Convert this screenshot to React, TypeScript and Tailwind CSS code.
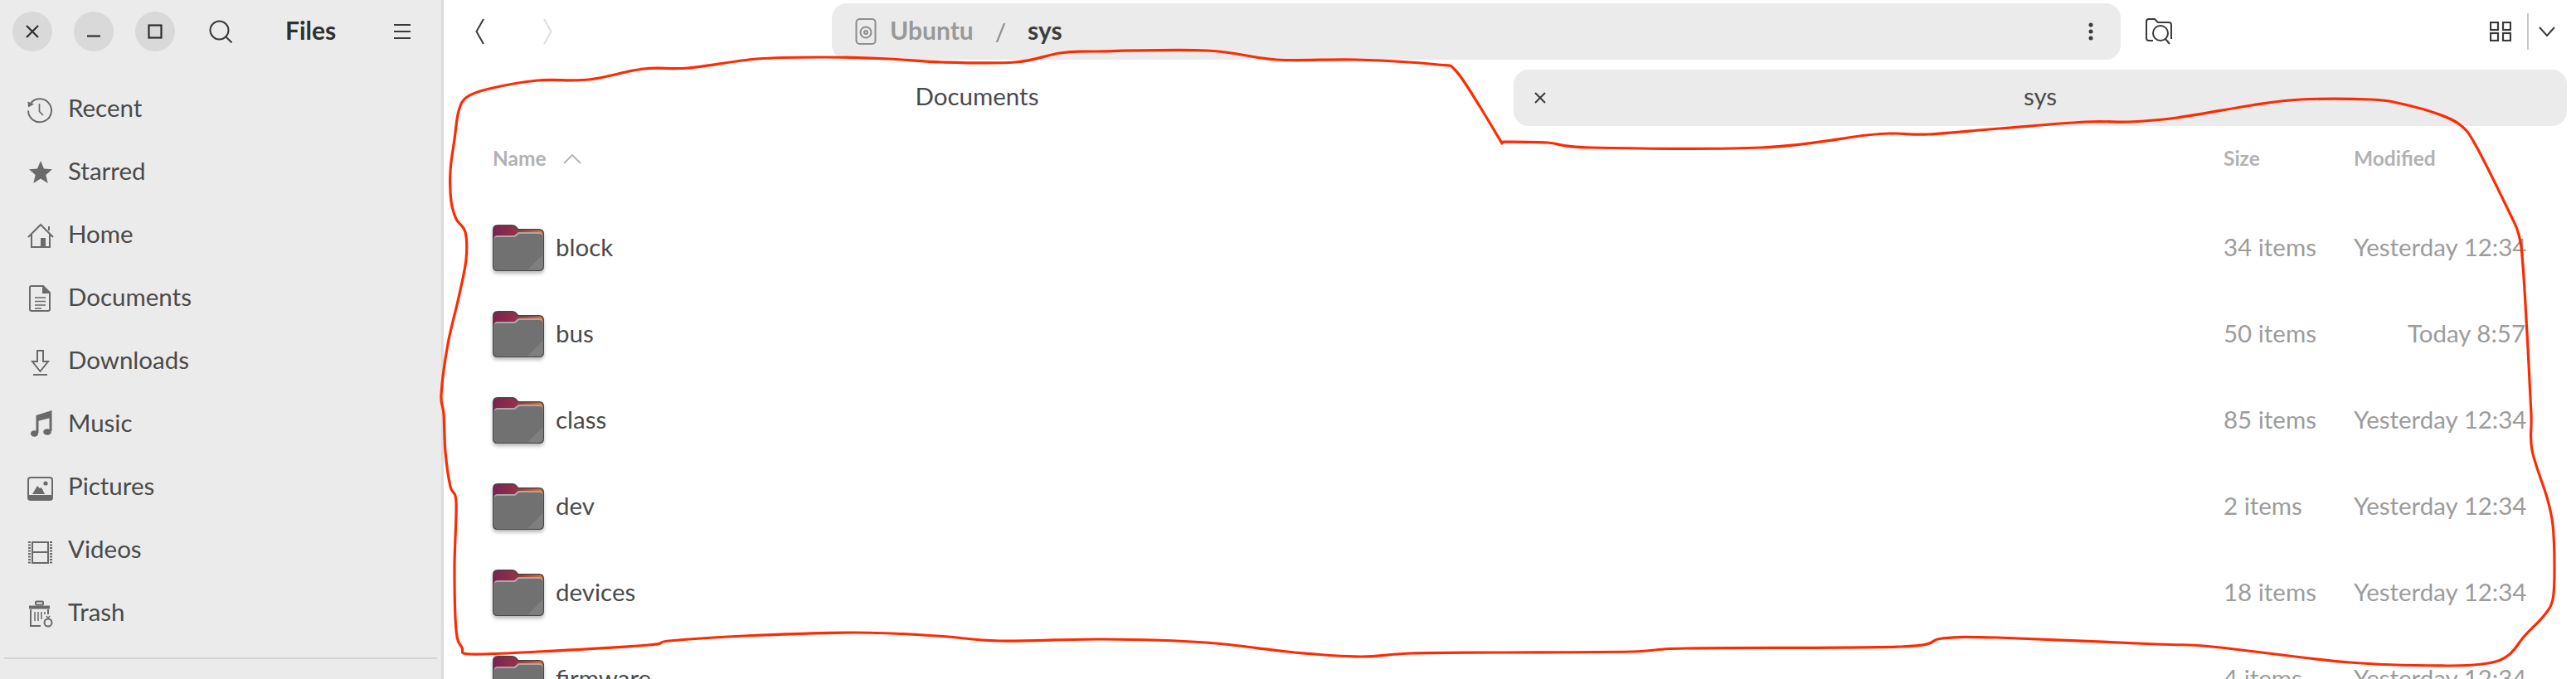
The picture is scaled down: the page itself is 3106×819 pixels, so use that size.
import React from "react";

const pts: [number, number][] = [[1812,171],[1866,172],[1918,178],[2124,178],[2251,163],[2285,161],[2325,162],[2411,155],[2515,147],[2567,147],[2625,142],[2715,127],[2774,120],[2859,120],[2895,125],[2941,138],[2968,152],[2986,177],[3026,257],[3037,283],[3042,320],[3048,420],[3052,500],[3053,543],[3071,600],[3078,633],[3080,683],[3078,723],[3067,743],[3044,767],[3025,790],[3000,800],[2950,803],[2833,799],[2667,780],[2600,777],[2408,769],[2342,770],[2292,780],[2033,782],[1967,786],[1800,787],[1702,788],[1640,792],[1561,787],[1454,775],[1329,771],[1205,773],[1130,767],[1031,763],[898,767],[807,773],[782,778],[649,786],[567,789],[557,781],[550,760],[548,685],[550,606],[543,587],[537,545],[535,499],[532,476],[540,415],[553,359],[562,313],[561,280],[550,264],[544,243],[543,206],[548,168],[553,134],[563,117],[590,107],[648,97],[710,96],[776,83],[830,82],[913,71],[996,69],[1071,71],[1137,75],[1224,75],[1278,64],[1319,62],[1456,61],[1539,72],[1635,72],[1734,78],[1755,85],[1784,128],[1811,173]];

function smooth(p: [number, number][]) {
  let d = `M${p[0][0]} ${p[0][1]}`;
  for (let i = 0; i < p.length - 1; i++) {
    const a = p[Math.max(i - 1, 0)], b = p[i], c = p[i + 1], e = p[Math.min(i + 2, p.length - 1)];
    const c1x = b[0] + (c[0] - a[0]) / 6, c1y = b[1] + (c[1] - a[1]) / 6;
    const c2x = c[0] - (e[0] - b[0]) / 6, c2y = c[1] - (e[1] - b[1]) / 6;
    d += ` C${c1x.toFixed(1)} ${c1y.toFixed(1)} ${c2x.toFixed(1)} ${c2y.toFixed(1)} ${c[0]} ${c[1]}`;
  }
  return d;
}

const G = "#6a6a6a";
const I = ({ children }: { children: React.ReactNode }) => (
  <svg width="32" height="32" viewBox="0 0 32 32" fill="none" stroke={G} strokeWidth="2" className="shrink-0 overflow-visible">{children}</svg>
);

const icons: Record<string, React.ReactNode> = {
  Recent: <I><path d="M5.5 8A14 14 0 1 1 2 17.5" /><path d="M1.5 6.5 9 9.5l-7 4z" fill={G} stroke="none" /><path d="M15.5 9v9.5l4.5 4.5" strokeWidth="1.7" /></I>,
  Starred: <I><path d="M17 2l4 9.5 10 .8-7.7 6.6 2.4 10L17 23.5 8.3 29l2.4-10L3 12.3l10-.8z" fill={G} stroke="none" /></I>,
  Home: <I><path d="M2 18 17 3l15 15" /><path d="M6 15v15h22V15" /><path d="M27 5v5" strokeWidth="2" /><rect x="17" y="19" width="6" height="11" fill={G} stroke="none" /></I>,
  Documents: <I><path d="M6 1h14l8 8v20a2 2 0 0 1-2 2H6a2 2 0 0 1-2-2V3a2 2 0 0 1 2-2z" /><path d="M19 1l9 9h-9z" fill={G} stroke="none" /><path d="M10 15h13M10 19.500h13M10 24h13M10 28h8" strokeWidth="1.7" /></I>,
  Downloads: <I><path d="M13 3h7v13h6L16.500 28 7 16h6z" /><path d="M8 32h17" /></I>,
  Music: <I><path d="M13 26V6l16-5v23" strokeWidth="3" /><path d="M13 5l16-4v7l-16 4z" fill={G} stroke="none" /><ellipse cx="9.500" cy="27" rx="4.500" ry="3.800" fill={G} stroke="none" /><ellipse cx="25" cy="25" rx="4.800" ry="3.800" fill={G} stroke="none" /></I>,
  Pictures: <I><rect x="2" y="4" width="29" height="27" rx="3" /><path d="M2 25h29v3a3 3 0 0 1-3 3H5a3 3 0 0 1-3-3z" fill={G} stroke="none" /><path d="M7 24l6-10 3 3 2-1 4 8z" fill={G} stroke="none" /><circle cx="23" cy="11" r="2.600" fill={G} stroke="none" /></I>,
  Videos: <I><path d="M7 6h19M7 18h19M7 31h19" strokeWidth="2" /><path d="M7 5v27M26 5v27" strokeWidth="2" /><path d="M3.500 5v27M29.500 5v27" strokeWidth="3" strokeDasharray="2 1.500" /></I>,
  Trash: <I><path d="M3 8.500h25" strokeWidth="4" /><rect x="11" y="1.500" width="9" height="4" rx="1" /><path d="M5 11v20h12" /><path d="M26 11v6" /><path d="M10 14v11M14 14v11M18 14v9M22 14v3" strokeWidth="1.500" /><circle cx="26" cy="27" r="4.500" /><path d="M24 19l2 3 2-3" strokeWidth="1.500" /></I>,
};

const Folder = () => (
  <svg width="62" height="60" viewBox="0 0 62 60" className="shrink-0 overflow-visible drop-shadow-[0_3px_2px_rgba(0,0,0,0.28)]">
    <defs>
      <linearGradient id="fold" x1="0" x2="1" y1="0" y2="0">
        <stop offset="0" stopColor="#7a2350" />
        <stop offset="0.45" stopColor="#96304a" />
        <stop offset="1" stopColor="#e8702c" />
      </linearGradient>
    </defs>
    <path d="M6 0H24Q27 0 29 2.500L31 5H56Q62 5 62 11V50Q62 56 56 56H6Q0 56 0 50V6Q0 0 6 0Z" fill="#4a4446" />
    <path d="M6 1.500H24Q26 1.500 28 4L30 6.500H56Q60.500 6.500 60.500 11V20H1.500V6Q1.500 1.500 6 1.500Z" fill="url(#fold)" />
    <path d="M1.500 18Q1.500 13 6 13H26L31 9H56Q60.500 9 60.500 13V50Q60.500 54.500 56 54.500H6Q1.500 54.500 1.500 50Z" fill="#a8a8a8" />
    <path d="M1.500 19Q1.500 15 6 15H27L32 11H56Q60.500 11 60.500 15V50Q60.500 54.500 56 54.500H6Q1.500 54.500 1.500 50Z" fill="#717171" />
    <path d="M42 54.500 60.500 36V50Q60.500 54.500 56 54.500Z" fill="#7f7f7f" />
  </svg>
);

const items = ["Recent", "Starred", "Home", "Documents", "Downloads", "Music", "Pictures", "Videos", "Trash"];
const rows = [
  ["block", "34 items", "Yesterday 12:34"],
  ["bus", "50 items", "Today 8:57"],
  ["class", "85 items", "Yesterday 12:34"],
  ["dev", "2 items", "Yesterday 12:34"],
  ["devices", "18 items", "Yesterday 12:34"],
  ["firmware", "4 items", "Yesterday 12:34"],
];

const Round = ({ children }: { children: React.ReactNode }) => (
  <div className="flex h-[48px] w-[48px] items-center justify-center rounded-full bg-[#d9d9d9]">{children}</div>
);

export default function App() {
  return (
    <div className="relative flex h-[819px] w-[3106px] overflow-hidden bg-white text-[29.5px] font-normal text-[#4a4a4a] [font-family:Lato,'Noto_Sans',sans-serif]">
      <aside className="flex h-full w-[535px] shrink-0 flex-col border-r-[3px] border-[#dcdcdc] bg-[#ebebeb]">
        <header className="flex h-[76px] items-center pl-[15px]">
          <div className="flex gap-[26px]">
            <Round><svg width="18" height="18" viewBox="0 0 18 18" stroke="#2e2e2e" strokeWidth="2.200"><path d="M2 2l14 14M16 2 2 16" /></svg></Round>
            <Round><svg width="18" height="18" viewBox="0 0 18 18" stroke="#2e2e2e" strokeWidth="2.200"><path d="M1 14.500h16" /></svg></Round>
            <Round><svg width="18" height="18" viewBox="0 0 18 18" fill="none" stroke="#2e2e2e" strokeWidth="2.200"><rect x="1.500" y="1.500" width="15" height="15" /></svg></Round>
          </div>
          <svg width="28" height="28" viewBox="0 0 28 28" fill="none" stroke="#3a3a3a" strokeWidth="2" className="ml-[41px]"><circle cx="12.500" cy="12.500" r="11" /><path d="M20.500 20.500l7 7" /></svg>
          <span className="ml-[64px] pb-[3px] text-[30px] font-bold text-[#303030]">Files</span>
          <svg width="20" height="18" viewBox="0 0 20 18" stroke="#3a3a3a" strokeWidth="2" className="ml-[70px]"><path d="M0 1h20M0 9h20M0 17h20" /></svg>
        </header>
        <nav className="flex flex-col pt-[18px]">
          {items.map((t) => (
            <div key={t} className="flex h-[76px] items-center gap-[18px] pl-[32px]">
              {icons[t]}
              <span className="pb-[4px]">{t}</span>
            </div>
          ))}
        </nav>
        <div className="mx-[5px] mt-[15px] h-[2px] bg-[#d3d3d3]" />
      </aside>

      <main className="flex min-w-0 flex-1 flex-col">
        <div className="flex h-[76px] shrink-0 items-center">
          <div className="flex h-full w-[468px] items-center pl-[38px]">
            <svg width="11" height="32" viewBox="0 0 11 32" fill="none" stroke="#3a3a3a" strokeWidth="2"><path d="M10 1 1.500 16 10 31" /></svg>
            <svg width="11" height="32" viewBox="0 0 11 32" fill="none" stroke="#dedede" strokeWidth="2" className="ml-[71px]"><path d="M1 1l8.500 15L1 31" /></svg>
          </div>
          <div className="flex h-[68px] w-[1554px] items-center rounded-[18px] bg-[#ebebeb] pl-[28px] pr-[33px]">
            <svg width="26" height="32" viewBox="0 0 26 32" fill="none" stroke="#8e8e8e" strokeWidth="2"><rect x="1.500" y="1" width="23" height="30" rx="4" /><circle cx="13" cy="17" r="6.500" /><circle cx="13" cy="17" r="2" /></svg>
            <span className="ml-[16px] pb-[3px] text-[30px] font-bold text-[#999999]">Ubuntu</span>
            <span className="ml-[26px] text-[#8a8a8a]">/</span>
            <span className="ml-[26px] pb-[3px] text-[30px] font-bold text-[#3d3d3d]">sys</span>
            <svg width="6" height="22" viewBox="0 0 6 22" fill="#3a3a3a" className="ml-auto"><circle cx="3" cy="3" r="2.500" /><circle cx="3" cy="11" r="2.500" /><circle cx="3" cy="19" r="2.500" /></svg>
          </div>
          <svg width="33" height="32" viewBox="0 0 33 32" fill="none" stroke="#3a3a3a" strokeWidth="2" className="ml-[30px]"><path d="M9 27H4a3 3 0 0 1-3-3V4a3 3 0 0 1 3-3h7l4 4h13a3 3 0 0 1 3 3v17" /><circle cx="18" cy="18" r="9" /><path d="M24 25l5 6" /></svg>
          <svg width="26" height="24" viewBox="0 0 26 24" fill="none" stroke="#3a3a3a" strokeWidth="2.200" className="ml-auto"><rect x="1" y="1" width="9" height="9" /><rect x="16" y="1" width="9" height="9" /><rect x="1" y="14" width="9" height="9" /><rect x="16" y="14" width="9" height="9" /></svg>
          <div className="ml-[19px] h-[44px] w-[2px] bg-[#c8c8c8]" />
          <svg width="20" height="12" viewBox="0 0 20 12" fill="none" stroke="#3a3a3a" strokeWidth="2" className="ml-[12px] mr-[25px]"><path d="M1 1l9 10 9-10" /></svg>
        </div>

        <div className="flex h-[76px] shrink-0 pr-[11px]">
          <div className="flex w-[1286px] items-center justify-center pt-[4px]">Documents</div>
          <div className="ml-[4px] mt-[8px] grid flex-1 grid-cols-[64px_1fr_64px] items-center rounded-[18px] bg-[#ebebeb]">
            <svg width="14" height="14" viewBox="0 0 14 14" stroke="#3a3a3a" strokeWidth="2" className="justify-self-center"><path d="M1 1l12 12M13 1 1 13" /></svg>
            <span className="pb-[3px] text-center">sys</span>
          </div>
        </div>

        <div className="flex h-[82px] shrink-0 items-center pl-[59px] pr-[61px] pb-[3px] text-[24.5px] font-bold text-[#b2b2b2]">
          <div className="flex flex-1 items-center">
            <span>Name</span>
            <svg width="22" height="12" viewBox="0 0 22 12" fill="none" stroke="#b2b2b2" strokeWidth="1.800" className="ml-[20px]"><path d="M1 11 11 1l10 10" /></svg>
          </div>
          <div className="w-[157px]">Size</div>
          <div className="w-[207px]">Modified</div>
        </div>

        <div className="flex flex-col pt-[15px]">
          {rows.map(([n, s, m]) => (
            <div key={n} className="flex h-[104px] shrink-0 items-center pl-[59px] pr-[61px]">
              <div className="flex flex-1 items-center gap-[14px]">
                <Folder />
                <span className="pb-[6px]">{n}</span>
              </div>
              <div className="w-[157px] pb-[6px] text-[#9c9c9c]">{s}</div>
              <div className="w-[207px] whitespace-nowrap pb-[6px] text-right text-[#9c9c9c]">{m}</div>
            </div>
          ))}
        </div>
      </main>

      <svg width="3106" height="819" viewBox="0 0 3106 819" fill="none" className="pointer-events-none absolute left-0 top-0">
        <path d={smooth(pts)} stroke="#ff2a00" strokeWidth="3.200" strokeLinejoin="round" strokeLinecap="round" />
      </svg>
    </div>
  );
}
